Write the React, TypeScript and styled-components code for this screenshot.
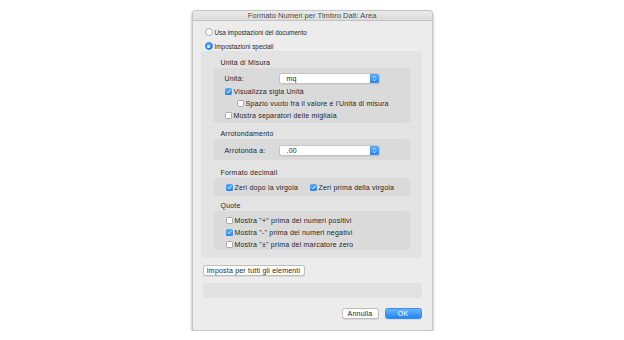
import React from "react";
import styled, { createGlobalStyle } from "styled-components";

const GlobalStyle = createGlobalStyle`
  body {
    margin: 0;
    background: #ffffff;
  }
`;

const Dialog = styled.div`
  width: 239px;
  margin: 10px auto 0;
  background: #ececec;
  border: 1px solid #c6c6c6;
  border-radius: 4px 4px 2px 2px;
  box-shadow: 0 2px 3px rgba(0, 0, 0, 0.35), 0 0 1px rgba(0, 0, 0, 0.15);
  font-family: "Liberation Sans", Arial, sans-serif;
  font-size: 7px;
  letter-spacing: 0.2px;
  color: #262626;
  white-space: nowrap;
`;

const TitleBar = styled.div`
  height: 9px;
  line-height: 10px;
  text-align: center;
  font-size: 7.6px;
  letter-spacing: 0;
  color: #4c4c4c;
  background: linear-gradient(#eaeaea, #dcdcdc);
  border-bottom: 1px solid #c2c2c2;
  border-radius: 4px 4px 0 0;
`;

const Body = styled.div`
  padding: 6px 10px 11px 8px;
`;

const RadioList = styled.div`
  display: flex;
  flex-direction: column;
  gap: 4px;
`;

const RadioRow = styled.label`
  display: flex;
  align-items: center;
  gap: 2px;
  height: 10px;
  padding-left: 4px;
  font-size: 6.4px;
  letter-spacing: 0;
`;

const Radio = styled.span<{ $on?: boolean }>`
  box-sizing: border-box;
  width: 8px;
  height: 8px;
  border-radius: 50%;
  background: ${({ $on }) => ($on ? "linear-gradient(#55a6fb, #1d7ef5)" : "#ffffff")};
  border: 1px solid ${({ $on }) => ($on ? "#2a7fe6" : "#a9a9a9")};
  display: flex;
  align-items: center;
  justify-content: center;
  &::after {
    content: "";
    width: 3px;
    height: 3px;
    border-radius: 50%;
    background: #ffffff;
    display: ${({ $on }) => ($on ? "block" : "none")};
  }
`;

const Group = styled.div`
  background: #e3e3e3;
  border-radius: 3px;
  padding: 7px 12px 8px 13px;
`;

const SectionLabel = styled.div<{ $top?: number }>`
  height: 10px;
  line-height: 10px;
  padding-left: 7px;
  margin-top: ${({ $top }) => $top ?? 0}px;
`;

const Box = styled.div<{ $pad: string }>`
  background: #dadada;
  border-radius: 3px;
  padding: ${({ $pad }) => $pad};
`;

const FieldRow = styled.div<{ $gapBelow?: number }>`
  display: flex;
  align-items: center;
  height: 11px;
  margin-bottom: ${({ $gapBelow }) => $gapBelow ?? 0}px;
`;

const FieldLabel = styled.span`
  width: 54px;
`;

const Popup = styled.div`
  box-sizing: border-box;
  width: 101px;
  height: 11px;
  display: flex;
  align-items: center;
  background: #ffffff;
  border: 0.5px solid #c3c3c3;
  border-radius: 2.5px;
  box-shadow: 0 0.5px 0 rgba(0, 0, 0, 0.12);
  overflow: hidden;
`;

const PopupValue = styled.span`
  flex: 1;
  padding-left: 7px;
`;

const Stepper = styled.span`
  width: 9px;
  height: 100%;
  background: linear-gradient(#62aefb, #2585f5);
  display: flex;
  align-items: center;
  justify-content: center;
`;

const CheckRow = styled.label<{ $indent?: number }>`
  display: flex;
  align-items: center;
  gap: 2px;
  height: 12px;
  padding-left: ${({ $indent }) => $indent ?? 0}px;
`;

const InlineChecks = styled.div`
  display: flex;
  align-items: center;
  height: 12px;
`;

const InlineItem = styled(CheckRow)<{ $w?: number }>`
  width: ${({ $w }) => ($w ? `${$w}px` : "auto")};
`;

const Box7 = styled.span<{ $on?: boolean }>`
  box-sizing: border-box;
  flex: none;
  width: 7px;
  height: 7px;
  border-radius: 1.5px;
  background: ${({ $on }) => ($on ? "linear-gradient(#5aa9fb, #2184f6)" : "#ffffff")};
  border: ${({ $on }) => ($on ? "none" : "0.75px solid #a6a6a6")};
  display: flex;
  align-items: center;
  justify-content: center;
`;

const PushButton = styled.button<{ $w: number; $primary?: boolean }>`
  box-sizing: border-box;
  width: ${({ $w }) => $w}px;
  height: 11px;
  padding: 0;
  font-family: inherit;
  font-size: 7px;
  letter-spacing: 0.2px;
  line-height: 10px;
  white-space: nowrap;
  color: ${({ $primary }) => ($primary ? "#ffffff" : "#262626")};
  background: ${({ $primary }) => ($primary ? "linear-gradient(#6cb4fb, #1f86f8)" : "#ffffff")};
  border: 0.5px solid ${({ $primary }) => ($primary ? "#3a8ef0" : "#bdbdbd")};
  border-radius: 2.5px;
  box-shadow: 0 0.5px 0 rgba(0, 0, 0, 0.15);
`;

const ApplyAll = styled(PushButton)`
  display: block;
  margin: 7px 0 0 2px;
  text-align: center;
`;

const InfoBox = styled.div`
  height: 15px;
  margin: 7px 0 0 2px;
  background: #e1e1e1;
  border-radius: 3px;
`;

const Footer = styled.div`
  display: flex;
  justify-content: flex-end;
  gap: 6px;
  margin-top: 10px;
`;

const Check = ({ on }: { on?: boolean }) => (
  <Box7 $on={on}>
    {on && (
      <svg width="5" height="5" viewBox="0 0 10 10">
        <path d="M2 5.4 L4.2 7.6 L8.3 2.2" fill="none" stroke="#fff" strokeWidth="1.8" strokeLinecap="round" strokeLinejoin="round" />
      </svg>
    )}
  </Box7>
);

const Arrows = () => (
  <svg width="5" height="7" viewBox="0 0 10 14">
    <path d="M2.5 5 L5 2.5 L7.5 5 M2.5 9 L5 11.5 L7.5 9" fill="none" stroke="#fff" strokeWidth="1.5" strokeLinecap="round" strokeLinejoin="round" />
  </svg>
);

const PopupField = ({ label, value }: { label: string; value: string }) => (
  <>
    <FieldLabel>{label}</FieldLabel>
    <Popup>
      <PopupValue>{value}</PopupValue>
      <Stepper>
        <Arrows />
      </Stepper>
    </Popup>
  </>
);

export default function App() {
  return (
    <>
      <GlobalStyle />
      <Dialog>
        <TitleBar>Formato Numeri per Timbro Dati: Area</TitleBar>
        <Body>
          <RadioList>
            <RadioRow>
              <Radio />
              Usa impostazioni del documento
            </RadioRow>
            <RadioRow>
              <Radio $on />
              Impostazioni speciali
            </RadioRow>
          </RadioList>

          <Group>
            <SectionLabel>Unità di Misura</SectionLabel>
            <Box $pad="5px 0 2px 11px">
              <FieldRow $gapBelow={1}>
                <PopupField label="Unità:" value="mq" />
              </FieldRow>
              <CheckRow>
                <Check on />
                Visualizza sigla Unità
              </CheckRow>
              <CheckRow $indent={12}>
                <Check />
                Spazio vuoto fra il valore e l'Unità di misura
              </CheckRow>
              <CheckRow>
                <Check />
                Mostra separatori delle migliaia
              </CheckRow>
            </Box>

            <SectionLabel $top={6}>Arrotondamento</SectionLabel>
            <Box $pad="6px 0 4px 11px">
              <FieldRow>
                <PopupField label="Arrotonda a:" value=".00" />
              </FieldRow>
            </Box>

            <SectionLabel $top={8}>Formato decimali</SectionLabel>
            <Box $pad="3px 0 3px 12px">
              <InlineChecks>
                <InlineItem $w={84}>
                  <Check on />
                  Zeri dopo la virgola
                </InlineItem>
                <InlineItem>
                  <Check on />
                  Zeri prima della virgola
                </InlineItem>
              </InlineChecks>
            </Box>

            <SectionLabel $top={5}>Quote</SectionLabel>
            <Box $pad="3px 0 0 12px">
              <CheckRow>
                <Check />
                Mostra "+" prima dei numeri positivi
              </CheckRow>
              <CheckRow>
                <Check on />
                Mostra "-" prima dei numeri negativi
              </CheckRow>
              <CheckRow>
                <Check />
                Mostra "±" prima del marcatore zero
              </CheckRow>
            </Box>
          </Group>

          <ApplyAll $w={102}>Imposta per tutti gli elementi</ApplyAll>
          <InfoBox />

          <Footer>
            <PushButton $w={37}>Annulla</PushButton>
            <PushButton $w={37} $primary>
              OK
            </PushButton>
          </Footer>
        </Body>
      </Dialog>
    </>
  );
}
